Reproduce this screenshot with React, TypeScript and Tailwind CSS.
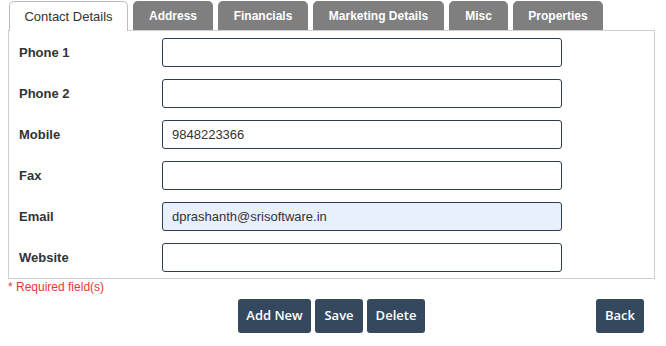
const tabs = [
  { label: 'Contact Details', w: 'w-[119px]', active: true },
  { label: 'Address', w: 'w-[80px]' },
  { label: 'Financials', w: 'w-[90px]' },
  { label: 'Marketing Details', w: 'w-[131px]' },
  { label: 'Misc', w: 'w-[59px]' },
  { label: 'Properties', w: 'w-[90px]' },
];

const fields = [
  { label: 'Phone 1', value: '' },
  { label: 'Phone 2', value: '' },
  { label: 'Mobile', value: '9848223366' },
  { label: 'Fax', value: '' },
  { label: 'Email', value: 'dprashanth@srisoftware.in', autofill: true },
  { label: 'Website', value: '' },
];

const App = () => {
  return (
    <div className="w-[666px] h-[346px] bg-white font-['Liberation_Sans',Arial,sans-serif] text-[#333]">
      <div className="ml-[8px] w-[647px]">
        {/* Tabs */}
        <div className="flex gap-[5px] pl-[1px] pt-[1px] h-[30px] items-end">
          {tabs.map((t) =>
            t.active ? (
              <div
                key={t.label}
                className={`${t.w} h-[30px] relative z-10 -mb-px bg-white border border-b-0 border-[#bdbdbd] rounded-t-[5px] flex items-center justify-center text-[13px] text-[#333]`}
              >
                {t.label}
              </div>
            ) : (
              <div
                key={t.label}
                className={`${t.w} h-[29px] bg-[#7f7f7f] rounded-t-[5px] flex items-center justify-center text-[12px] font-bold text-white`}
              >
                {t.label}
              </div>
            )
          )}
        </div>

        {/* Panel */}
        <div className="border border-[#cfcfcf] pt-[7px] pb-[6px] flex flex-col gap-[12px]">
          {fields.map((f) => (
            <div key={f.label} className="flex items-center h-[29px]">
              <div className="w-[153px] pl-[10px] text-[13px] font-bold text-[#333]">
                {f.label}
              </div>
              <input
                readOnly
                value={f.value}
                className={`w-[400px] h-[29px] border border-[#2c3e50] rounded-[3px] pl-[9px] text-[13px] text-[#333] outline-none ${
                  f.autofill ? 'bg-[#e8f0fe]' : 'bg-white'
                }`}
              />
            </div>
          ))}
        </div>

        <div className="text-[12px] text-[#e53935] leading-[14px] mt-[1px]">
          * Required field(s)
        </div>

        {/* Buttons */}
        <div className="grid grid-cols-[1fr_auto_1fr] mt-[5px]">
          <div />
          <div className="flex gap-[4px] font-['Open_Sans',sans-serif]">
            <button className="w-[73px] h-[34px] bg-[#34495e] text-white text-[13px] font-semibold rounded-[3px]">
              Add New
            </button>
            <button className="w-[48px] h-[34px] bg-[#34495e] text-white text-[13px] font-semibold rounded-[3px]">
              Save
            </button>
            <button className="w-[58px] h-[34px] bg-[#34495e] text-white text-[13px] font-semibold rounded-[3px]">
              Delete
            </button>
          </div>
          <div className="flex justify-end pr-[11px] font-['Open_Sans',sans-serif]">
            <button className="w-[48px] h-[34px] bg-[#34495e] text-white text-[13px] font-semibold rounded-[3px]">
              Back
            </button>
          </div>
        </div>
      </div>
    </div>
  );
};

export default App;
